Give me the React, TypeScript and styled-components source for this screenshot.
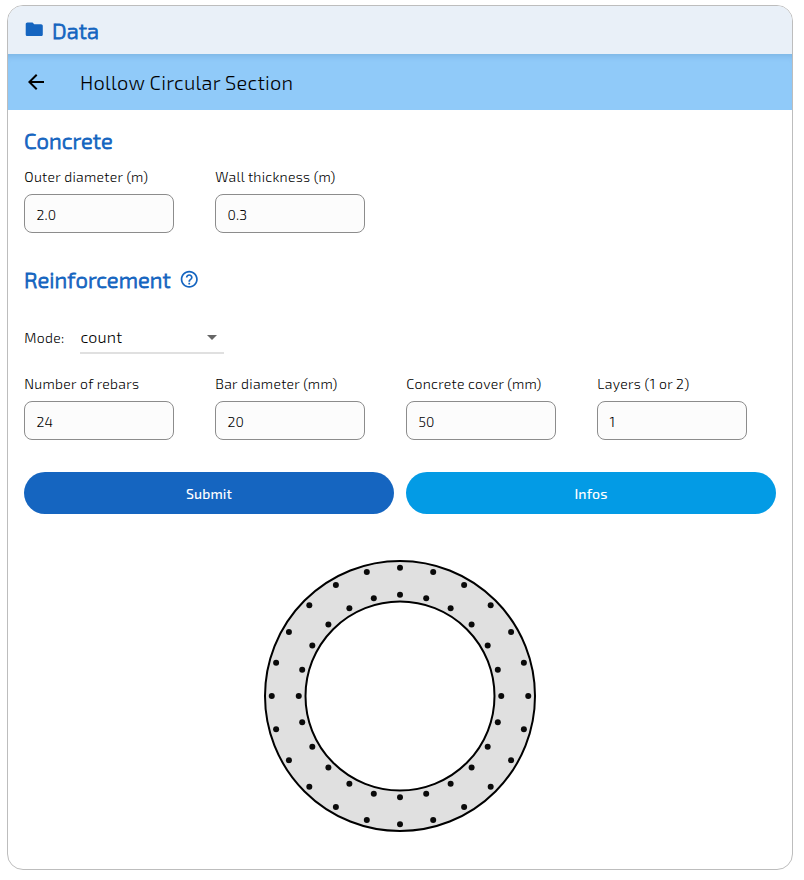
import React, { useState } from "react";
import styled, { createGlobalStyle } from "styled-components";
import { MdArrowBack, MdArrowDropDown, MdFolder, MdHelpOutline } from "react-icons/md";

const GlobalStyle = createGlobalStyle`
  *, *::before, *::after { box-sizing: border-box; }
  body {
    margin: 0;
    background: #fff;
    color: #000;
    font-family: "Exo 2", Roboto, sans-serif;
    font-weight: 355;
  }
`;

const Card = styled.main`
  width: 786px;
  height: 865px;
  margin: 5px 0 0 7px;
  border: 1px solid #bdbdbd;
  border-radius: 16px;
  background: #fff;
  overflow: hidden;
`;

const CardHeader = styled.header`
  display: flex;
  align-items: center;
  height: 48px;
  padding: 0 16px;
  gap: 7.5px;
  background: #e9f0f8;
  color: #1565c0;

  svg { margin-top: -1px; }
`;

const Heading = styled.h2`
  margin: 0;
  font-size: 22px;
  font-weight: 340;
  line-height: 32px;
  letter-spacing: 0.08px;
  color: #1565c0;
  -webkit-text-stroke: 0.85px #1565c0;
`;

const Toolbar = styled.div`
  display: flex;
  align-items: center;
  height: 56px;
  padding-left: 16px;
  gap: 32px;
  background: #90caf9;
  box-shadow: inset 0 6px 6px -4px rgba(0, 40, 90, 0.14);
`;

const BackButton = styled.button`
  display: flex;
  padding: 0;
  border: 0;
  background: none;
  color: #000;
`;

const ToolbarTitle = styled.h1`
  margin: 0;
  font-size: 20px;
  font-weight: 350;
  line-height: 28px;
  letter-spacing: 0.25px;
`;

const Form = styled.form`
  display: flex;
  flex-direction: column;
  padding: 14px 16px 0;
`;

const TitleRow = styled.div<{ $top?: number }>`
  display: flex;
  align-items: center;
  gap: 8px;
  height: 32px;
  margin-top: ${({ $top = 0 }) => $top}px;
  color: #1565c0;
`;

const Fields = styled.div<{ $top: number }>`
  display: flex;
  gap: 41px;
  margin-top: ${({ $top }) => $top}px;
`;

const FieldBox = styled.label`
  display: flex;
  flex-direction: column;
  gap: 7px;
  width: 150px;
  font-size: 14px;
  line-height: 20px;
`;

const Caption = styled.span`
  padding-left: 0.3px;
  white-space: nowrap;
  letter-spacing: 0.28px;
`;

const Input = styled.input`
  width: 100%;
  height: 39px;
  padding: 1px 11px 0 11.4px;
  border: 1px solid #8c8c8c;
  border-radius: 8px;
  outline: 0;
  background: #fcfcfc;
  color: #000;
  font: inherit;
  letter-spacing: 0.25px;
`;

const ModeRow = styled.div`
  display: flex;
  align-items: flex-end;
  gap: 16px;
  height: 32px;
  margin-top: 27px;
`;

const ModeLabel = styled.span`
  width: 40px;
  padding: 0 0 6px 0.3px;
  font-size: 14px;
  line-height: 20px;
  letter-spacing: 0.28px;
`;

const Select = styled.button`
  display: flex;
  align-items: center;
  justify-content: space-between;
  width: 144px;
  height: 32px;
  padding: 0 0 0 0.5px;
  border: 0;
  border-bottom: 2px solid #e0e0e0;
  background: none;
  color: #000;
  font: 360 16px/24px "Exo 2", Roboto, sans-serif;
  letter-spacing: 0.18px;

  svg { color: #666; }
`;

const Actions = styled.div`
  display: grid;
  grid-template-columns: 1fr 1fr;
  gap: 12px;
  margin-top: 32px;
`;

const ActionButton = styled.button<{ $color: string }>`
  height: 42px;
  padding: 1px 0 0;
  border: 0;
  border-radius: 21px;
  background: ${({ $color }) => $color};
  color: #fff;
  font: 460 14px/20px "Exo 2", Roboto, sans-serif;
  letter-spacing: 0.12px;
`;

const Drawing = styled.figure`
  display: flex;
  justify-content: center;
  margin: 44px 0 0;
`;

type FieldProps = { label: string; initial: string };

function Field({ label, initial }: FieldProps) {
  const [value, setValue] = useState(initial);
  return (
    <FieldBox>
      <Caption>{label}</Caption>
      <Input value={value} onChange={(e) => setValue(e.target.value)} />
    </FieldBox>
  );
}

// Cross-section geometry in metres, drawn at 135 px per metre.
const SCALE = 135;
const CENTER = 138;
const OUTER_RADIUS = 1;
const WALL = 0.3;
const COVER = 0.05;
const BARS = 24;

function Section() {
  const rings = [OUTER_RADIUS - COVER, OUTER_RADIUS - WALL + COVER];
  return (
    <svg width={276} height={276} viewBox="0 0 276 276">
      <circle cx={CENTER} cy={CENTER} r={OUTER_RADIUS * SCALE} fill="#e0e0e0" stroke="#000" strokeWidth={2} />
      <circle cx={CENTER} cy={CENTER} r={(OUTER_RADIUS - WALL) * SCALE} fill="#fff" stroke="#000" strokeWidth={2} />
      {rings.map((radius) =>
        Array.from({ length: BARS }, (_, i) => {
          const angle = (2 * Math.PI * i) / BARS;
          return (
            <circle
              key={`${radius}-${i}`}
              cx={CENTER + Math.cos(angle) * radius * SCALE}
              cy={CENTER + Math.sin(angle) * radius * SCALE}
              r={3}
              fill="#0a0a0a"
            />
          );
        })
      )}
    </svg>
  );
}

export default function App() {
  return (
    <>
      <GlobalStyle />
      <Card>
        <CardHeader>
          <MdFolder size={20.5} />
          <Heading>Data</Heading>
        </CardHeader>
        <Toolbar>
          <BackButton aria-label="Back">
            <MdArrowBack size={24} />
          </BackButton>
          <ToolbarTitle>Hollow Circular Section</ToolbarTitle>
        </Toolbar>
        <Form onSubmit={(e) => e.preventDefault()}>
          <TitleRow>
            <Heading>Concrete</Heading>
          </TitleRow>
          <Fields $top={11}>
            <Field label="Outer diameter (m)" initial="2.0" />
            <Field label="Wall thickness (m)" initial="0.3" />
          </Fields>
          <TitleRow $top={30}>
            <Heading>Reinforcement</Heading>
            <MdHelpOutline size={20.5} />
          </TitleRow>
          <ModeRow>
            <ModeLabel>Mode:</ModeLabel>
            <Select type="button">
              count
              <MdArrowDropDown size={24} />
            </Select>
          </ModeRow>
          <Fields $top={20}>
            <Field label="Number of rebars" initial="24" />
            <Field label="Bar diameter (mm)" initial="20" />
            <Field label="Concrete cover (mm)" initial="50" />
            <Field label="Layers (1 or 2)" initial="1" />
          </Fields>
          <Actions>
            <ActionButton type="submit" $color="#1565c0">Submit</ActionButton>
            <ActionButton type="button" $color="#039be5">Infos</ActionButton>
          </Actions>
        </Form>
        <Drawing>
          <Section />
        </Drawing>
      </Card>
    </>
  );
}
